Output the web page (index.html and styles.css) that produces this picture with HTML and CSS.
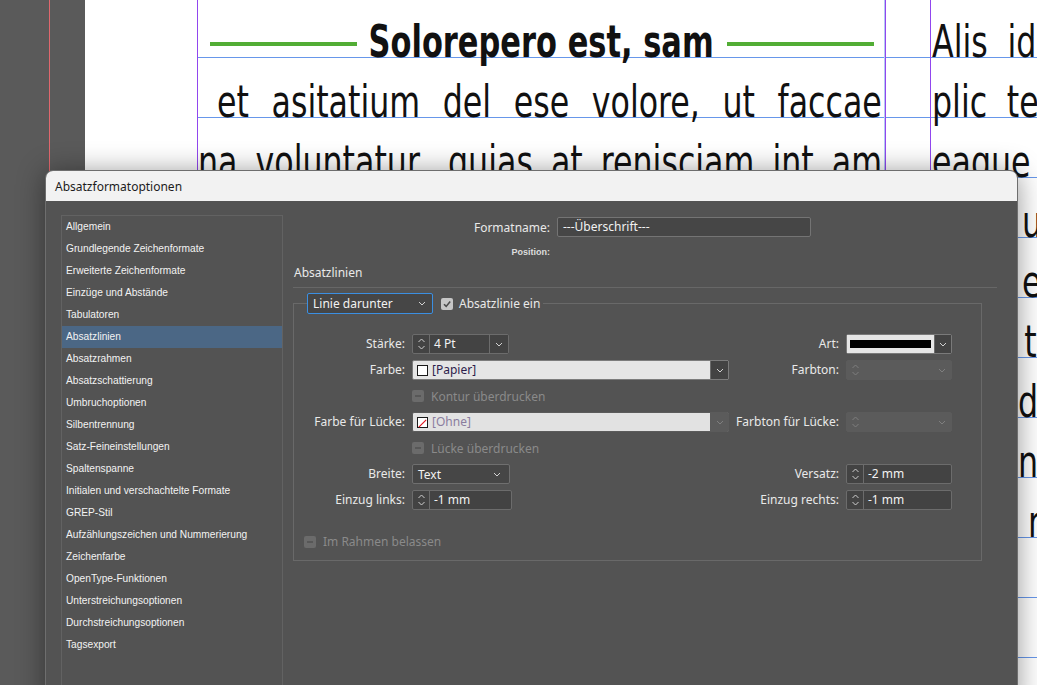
FILE: index.html
```html
<!DOCTYPE html>
<html lang="de">
<head>
<meta charset="utf-8">
<title>Absatzformatoptionen</title>
<link rel="stylesheet" href="styles.css">
</head>
<body>
<div class="screen">
  <div class="pasteboard"></div>
  <div class="page">
    <div class="page-margin"></div>
    <div class="grid-area">
      <div class="frame frame-main">
        <div class="line heading-line">
          <span class="rule"></span>
          <span class="head-box"><span class="head-text">Solorepero est, sam</span></span>
          <span class="rule"></span>
        </div>
        <div class="line indent"><span class="jt">et asitatium del ese volore, ut faccae</span></div>
        <div class="line"><span class="jt">na voluntatur, quias at renisciam int am</span></div>
      </div>
      <div class="gutter"></div>
      <div class="frame frame-side">
        <div class="line"><span class="st">Alis idunt</span></div>
        <div class="line"><span class="st">plic tem</span></div>
        <div class="line"><span class="st">eaque nos</span></div>
        <div class="line"><span class="st">Quis ut</span></div>
        <div class="line"><span class="st">Odis en</span></div>
        <div class="line"><span class="st">Sunt tem</span></div>
        <div class="line"><span class="st">Volo dolo</span></div>
        <div class="line"><span class="st">Odit nis</span></div>
        <div class="line"><span class="st">Ecae nem</span></div>
      </div>
    </div>
  </div>

  <div class="dialog">
    <div class="titlebar">Absatzformatoptionen</div>
    <div class="dlg-body">
      <ul class="cat-list">
        <li>Allgemein</li>
        <li>Grundlegende Zeichenformate</li>
        <li>Erweiterte Zeichenformate</li>
        <li>Einzüge und Abstände</li>
        <li>Tabulatoren</li>
        <li class="sel">Absatzlinien</li>
        <li>Absatzrahmen</li>
        <li>Absatzschattierung</li>
        <li>Umbruchoptionen</li>
        <li>Silbentrennung</li>
        <li>Satz-Feineinstellungen</li>
        <li>Spaltenspanne</li>
        <li>Initialen und verschachtelte Formate</li>
        <li>GREP-Stil</li>
        <li>Aufzählungszeichen und Nummerierung</li>
        <li>Zeichenfarbe</li>
        <li>OpenType-Funktionen</li>
        <li>Unterstreichungsoptionen</li>
        <li>Durchstreichungsoptionen</li>
        <li>Tagsexport</li>
      </ul>

      <div class="panel">
        <div class="name-row">
          <span class="name-label">Formatname:</span>
          <div class="text-input">---Überschrift---</div>
        </div>
        <div class="pos-row">Position:</div>
        <div class="section-title">Absatzlinien</div>
        <div class="separator"></div>

        <fieldset class="group">
          <legend class="group-legend">
            <span class="select focus w-legend">
              <span class="sel-text">Linie darunter</span>
              <svg class="chev" width="8" height="5" viewBox="0 0 8 5"><path d="M1 1 L4 4 L7 1" /></svg>
            </span>
            <span class="check on"><svg width="12" height="12" viewBox="0 0 12 12"><path d="M3 6.2 L5.2 8.4 L9.2 3.6" /></svg></span>
            <span class="check-label">Absatzlinie ein</span>
          </legend>

          <div class="form-grid">
            <span class="lbl">Stärke:</span>
            <div class="cell">
              <span class="spin w-staerke">
                <span class="arrows"><svg width="9" height="14" viewBox="0 0 9 14"><path d="M1.5 5 L4.5 2 L7.5 5 M1.5 9 L4.5 12 L7.5 9" /></svg></span>
                <span class="val">4 Pt</span>
                <span class="dd"><svg class="chev" width="8" height="5" viewBox="0 0 8 5"><path d="M1 1 L4 4 L7 1" /></svg></span>
              </span>
            </div>
            <span class="lbl">Art:</span>
            <div class="cell">
              <span class="art-field">
                <span class="art-preview"><span class="art-bar"></span></span>
                <span class="dd"><svg class="chev" width="8" height="5" viewBox="0 0 8 5"><path d="M1 1 L4 4 L7 1" /></svg></span>
              </span>
            </div>

            <span class="lbl">Farbe:</span>
            <div class="cell">
              <span class="color-field">
                <span class="swatch"></span>
                <span class="color-name">[Papier]</span>
                <span class="dd"><svg class="chev" width="8" height="5" viewBox="0 0 8 5"><path d="M1 1 L4 4 L7 1" /></svg></span>
              </span>
            </div>
            <span class="lbl">Farbton:</span>
            <div class="cell">
              <span class="spin disabled w-right">
                <span class="arrows"><svg width="9" height="14" viewBox="0 0 9 14"><path d="M1.5 5 L4.5 2 L7.5 5 M1.5 9 L4.5 12 L7.5 9" /></svg></span>
                <span class="val"></span>
                <span class="dd"><svg class="chev" width="8" height="5" viewBox="0 0 8 5"><path d="M1 1 L4 4 L7 1" /></svg></span>
              </span>
            </div>

            <span class="lbl"></span>
            <div class="cell check-row">
              <span class="check off"><span class="dash"></span></span>
              <span class="check-label dim">Kontur überdrucken</span>
            </div>
            <span class="lbl"></span>
            <div class="cell"></div>

            <span class="lbl">Farbe für Lücke:</span>
            <div class="cell">
              <span class="color-field gap-color">
                <span class="swatch none"><svg width="11" height="11" viewBox="0 0 11 11"><path d="M1 10 L10 1" /></svg></span>
                <span class="color-name dim-name">[Ohne]</span>
                <span class="dd off"><svg class="chev" width="8" height="5" viewBox="0 0 8 5"><path d="M1 1 L4 4 L7 1" /></svg></span>
              </span>
            </div>
            <span class="lbl">Farbton für Lücke:</span>
            <div class="cell">
              <span class="spin disabled w-right">
                <span class="arrows"><svg width="9" height="14" viewBox="0 0 9 14"><path d="M1.5 5 L4.5 2 L7.5 5 M1.5 9 L4.5 12 L7.5 9" /></svg></span>
                <span class="val"></span>
                <span class="dd"><svg class="chev" width="8" height="5" viewBox="0 0 8 5"><path d="M1 1 L4 4 L7 1" /></svg></span>
              </span>
            </div>

            <span class="lbl"></span>
            <div class="cell check-row">
              <span class="check off"><span class="dash"></span></span>
              <span class="check-label dim">Lücke überdrucken</span>
            </div>
            <span class="lbl"></span>
            <div class="cell"></div>

            <span class="lbl">Breite:</span>
            <div class="cell">
              <span class="select w-breite">
                <span class="sel-text">Text</span>
                <svg class="chev" width="8" height="5" viewBox="0 0 8 5"><path d="M1 1 L4 4 L7 1" /></svg>
              </span>
            </div>
            <span class="lbl">Versatz:</span>
            <div class="cell">
              <span class="spin w-right">
                <span class="arrows"><svg width="9" height="14" viewBox="0 0 9 14"><path d="M1.5 5 L4.5 2 L7.5 5 M1.5 9 L4.5 12 L7.5 9" /></svg></span>
                <span class="val">-2 mm</span>
              </span>
            </div>

            <span class="lbl">Einzug links:</span>
            <div class="cell">
              <span class="spin w-einzug">
                <span class="arrows"><svg width="9" height="14" viewBox="0 0 9 14"><path d="M1.5 5 L4.5 2 L7.5 5 M1.5 9 L4.5 12 L7.5 9" /></svg></span>
                <span class="val">-1 mm</span>
              </span>
            </div>
            <span class="lbl">Einzug rechts:</span>
            <div class="cell">
              <span class="spin w-right">
                <span class="arrows"><svg width="9" height="14" viewBox="0 0 9 14"><path d="M1.5 5 L4.5 2 L7.5 5 M1.5 9 L4.5 12 L7.5 9" /></svg></span>
                <span class="val">-1 mm</span>
              </span>
            </div>
          </div>

          <div class="check-row frame-check">
            <span class="check off"><span class="dash"></span></span>
            <span class="check-label dim">Im Rahmen belassen</span>
          </div>
        </fieldset>
      </div>
    </div>
  </div>
</div>
</body>
</html>
```

FILE: styles.css
```css
* { box-sizing: border-box; }

html, body {
  margin: 0;
  padding: 0;
  background: #5a5a5a;
}

.screen {
  position: relative;
  width: 1037px;
  height: 685px;
  overflow: hidden;
  display: flex;
}

/* ---------- document behind ---------- */
.pasteboard {
  width: 85px;
  flex: none;
  background-color: #5a5a5a;
  background-image: linear-gradient(to right, transparent 49px, #e0676d 49px, #e0676d 50px, transparent 50px);
}

.page {
  flex: 1;
  display: flex;
  background: #ffffff;
}

.page-margin {
  width: 112px;
  flex: none;
}

.grid-area {
  flex: 1;
  display: flex;
  background-image: linear-gradient(to bottom, transparent 57px, #6797ea 57px, #6797ea 58px, transparent 58px);
  background-size: 100% 60px;
  background-repeat: repeat-y;
}

.frame {
  padding-top: 12px;
  font-family: "DejaVu Sans Condensed", "DejaVu Sans", sans-serif;
  font-stretch: condensed;
  font-size: 44px;
  line-height: 60px;
  color: #111111;
}

.frame-main {
  width: 689px;
  flex: none;
  border-left: 1px solid #9146ee;
  border-right: 1px solid #9146ee;
  box-shadow: inset -1px 0 0 #b4c8f4;
}

.gutter {
  width: 44px;
  flex: none;
}

.frame-side {
  flex: 1;
  border-left: 1px solid #9146ee;
  padding-left: 1px;
  white-space: nowrap;
  overflow: hidden;
}

.line {
  height: 60px;
}

.jt {
  display: block;
  width: 855px;
  transform: scaleX(0.8);
  transform-origin: left center;
  text-align: justify;
  text-align-last: justify;
  white-space: nowrap;
}

.indent {
  padding-left: 19px;
}

.indent .jt {
  width: 831px;
}

.st {
  display: inline-block;
  transform: scaleX(0.8);
  transform-origin: left center;
  word-spacing: 12px;
}

.heading-line {
  display: flex;
  justify-content: center;
  gap: 13px;
}

.rule {
  width: 147px;
  height: 4px;
  margin-top: 30px;
  background: #52ad35;
  flex: none;
}

.head-box {
  width: 344px;
  flex: none;
  display: flex;
  justify-content: center;
  white-space: nowrap;
}

.head-text {
  display: inline-block;
  font-weight: bold;
  transform: scaleX(0.77);
  transform-origin: center center;
}

/* ---------- dialog ---------- */
.dialog {
  position: absolute;
  left: 45px;
  top: 170px;
  width: 973px;
  height: 540px;
  background: #535353;
  border: 1px solid #6e6e6e;
  border-radius: 8px 8px 0 0;
  box-shadow: 0 2px 28px rgba(0, 0, 0, 0.42);
  font-family: "Noto Sans", "Open Sans", sans-serif;
  font-size: 12px;
  color: #e9e9e9;
  overflow: hidden;
}

.titlebar {
  height: 30px;
  background: #f2f2f2;
  color: #1c1c1c;
  padding-left: 9px;
  display: flex;
  align-items: center;
  font-size: 12px;
}

.dlg-body {
  display: flex;
  gap: 10px;
  padding: 14px 20px 0 15px;
}

.cat-list {
  list-style: none;
  margin: 0;
  padding: 0;
  width: 222px;
  height: 490px;
  flex: none;
  border: 1px solid #626262;
  font-family: "Liberation Sans", Arial, sans-serif;
  font-size: 10.2px;
  color: #f2f2f2;
}

.cat-list li {
  height: 22px;
  line-height: 22px;
  padding-left: 4px;
  white-space: nowrap;
}

.cat-list li.sel {
  background: #4b6785;
}

.panel {
  flex: 1;
  display: flex;
  flex-direction: column;
}

.name-row {
  display: flex;
  align-items: center;
  gap: 7px;
  margin-top: 2px;
  height: 20px;
}

.name-label {
  width: 257px;
  text-align: right;
}

.text-input {
  width: 254px;
  height: 20px;
  line-height: 18px;
  padding-left: 5px;
  background: #464646;
  border: 1px solid #747474;
  border-radius: 2px;
  color: #f2f2f2;
}

.pos-row {
  width: 257px;
  margin-top: 8px;
  height: 14px;
  line-height: 14px;
  text-align: right;
  font-family: "Liberation Sans", Arial, sans-serif;
  font-weight: bold;
  font-size: 9px;
  color: #dddddd;
}

.section-title {
  margin-top: 6px;
  height: 16px;
  line-height: 16px;
  padding-left: 1px;
}

.separator {
  margin-top: 6px;
  height: 1px;
  background: #676767;
}

.group {
  margin: 5px 15px 0 0;
  padding: 20px 0 8px 0;
  border: 1px solid #696969;
  min-width: 0;
}

.group-legend {
  margin-left: 13px;
  padding: 0 3px 0 0;
  display: flex;
  align-items: center;
}

.select {
  display: flex;
  align-items: center;
  justify-content: space-between;
  height: 21px;
  padding: 0 6px 0 5px;
  background: #464646;
  border: 1px solid #6f6f6f;
  border-radius: 2px;
  color: #f2f2f2;
}

.select.focus {
  border-color: #3b8fe2;
}

.w-legend { width: 126px; }
.w-breite { width: 98px; height: 20px; padding-right: 8px; }

.chev path {
  fill: none;
  stroke: #d2d2d2;
  stroke-width: 1;
}

.check {
  width: 12px;
  height: 12px;
  border-radius: 2px;
  display: inline-flex;
  align-items: center;
  justify-content: center;
  flex: none;
}

.check.on {
  background: #c6c6c6;
  margin-left: 8px;
}

.check.on path {
  fill: none;
  stroke: #4b4b4b;
  stroke-width: 1.6;
}

.check.off {
  background: #6b6b6b;
}

.dash {
  width: 6px;
  height: 2px;
  background: #575757;
}

.check-label {
  margin-left: 6px;
  white-space: nowrap;
}

.check-label.dim {
  color: #8a8a8a;
  margin-left: 7px;
}

.form-grid {
  display: grid;
  grid-template-columns: 118px 317px 117px 106px;
  grid-auto-rows: 20px;
  row-gap: 6px;
}

.lbl {
  text-align: right;
  padding-right: 7px;
  line-height: 20px;
  white-space: nowrap;
}

.cell {
  display: flex;
  align-items: center;
}

.check-row {
  display: flex;
  align-items: center;
}

.frame-check {
  margin-top: 21px;
  height: 21px;
  padding-left: 10px;
}

/* spinner fields */
.spin {
  display: flex;
  height: 20px;
  background: #434343;
  border: 1px solid #6c6c6c;
  border-radius: 2px;
  color: #f2f2f2;
}

.spin .arrows {
  width: 17px;
  flex: none;
  display: flex;
  align-items: center;
  justify-content: center;
  border-right: 1px solid #6c6c6c;
}

.arrows path {
  fill: none;
  stroke: #cfcfcf;
  stroke-width: 1;
}

.spin .val {
  flex: 1;
  padding-left: 4px;
  line-height: 18px;
  white-space: nowrap;
}

.dd {
  width: 19px;
  flex: none;
  display: flex;
  align-items: center;
  justify-content: center;
  background: #434343;
  border-left: 1px solid #6c6c6c;
}

.w-staerke { width: 97px; }
.w-einzug { width: 100px; }
.w-right { width: 107px; }

.spin.disabled {
  background: #5b5b5b;
  border-color: #5b5b5b;
}

.spin.disabled .arrows {
  border-right-color: #5b5b5b;
}

.spin.disabled .dd {
  background: #5b5b5b;
  border-left-color: #5b5b5b;
}

.spin.disabled path {
  stroke: #7f7f7f;
}

/* colour fields */
.color-field {
  display: flex;
  align-items: center;
  width: 317px;
  height: 20px;
  background: #e5e5e5;
  border: 1px solid #7c7c7c;
  border-radius: 2px;
}

.swatch {
  width: 11px;
  height: 11px;
  margin-left: 4px;
  background: #ffffff;
  border: 1px solid #1a1a1a;
  flex: none;
  display: flex;
}

.swatch.none svg {
  display: block;
}

.swatch.none path {
  stroke: #e0141e;
  stroke-width: 1.4;
}

.color-name {
  margin-left: 4px;
  flex: 1;
  color: #2d1d4c;
  line-height: 18px;
}

.color-name.dim-name {
  color: #8a7d9e;
}

.color-field .dd {
  height: 18px;
  width: 18px;
}

.gap-color {
  background: #e2e2e2;
  border-color: #5b5b5b;
}

.dd.off {
  background: #5b5b5b;
  border-left-color: #5b5b5b;
}

.dd.off path {
  stroke: #7f7f7f;
}

/* Art */
.art-field {
  display: flex;
  width: 106px;
  height: 20px;
  border: 1px solid #7a7a7a;
  border-radius: 2px;
}

.art-preview {
  flex: 1;
  background: #e6e6e6;
  display: flex;
  align-items: center;
  padding: 0 3px 0 3px;
}

.art-bar {
  flex: 1;
  height: 8px;
  background: #000000;
}

.art-field .dd {
  width: 17px;
  background: #434343;
}
```
